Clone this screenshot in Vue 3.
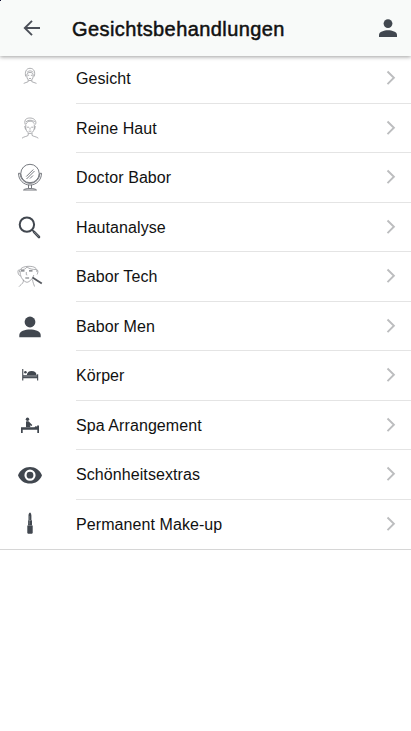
<script setup>
const items = [
    { icon: 'face', label: 'Gesicht' },
    { icon: 'towel', label: 'Reine Haut' },
    { icon: 'mirror', label: 'Doctor Babor' },
    { icon: 'search', label: 'Hautanalyse' },
    { icon: 'tech', label: 'Babor Tech' },
    { icon: 'person', label: 'Babor Men' },
    { icon: 'bed', label: 'Körper' },
    { icon: 'massage', label: 'Spa Arrangement' },
    { icon: 'eye', label: 'Schönheitsextras' },
    { icon: 'lipstick', label: 'Permanent Make-up' }
];
</script>

<template>
    <div class="page">
        <header class="toolbar">
            <span class="corner"></span>
            <button class="back" aria-label="Zurück">
                <svg width="18" height="18" viewBox="0 0 18 18">
                    <path d="M17 9H2M9 1.800 1.800 9 9 16.200" fill="none" stroke="#4b4f58" stroke-width="1.900" />
                </svg>
            </button>
            <h1 class="title">Gesichtsbehandlungen</h1>
            <button class="profile" aria-label="Profil">
                <svg width="18" height="18" viewBox="0 0 18 18">
                    <circle cx="9" cy="4.600" r="4.400" />
                    <path d="M0 18v-2.200C0 12.800 5 11.300 9 11.300s9 1.500 9 4.500V18z" />
                </svg>
            </button>
        </header>

        <ul class="list">
            <li v-for="item in items" :key="item.icon" class="item">
                <svg class="icon" width="60" height="49.5" viewBox="0 0 60 49.5">
                    <g v-if="item.icon === 'face'" class="sketch">
                        <path d="M25.7 22.5c-1-4 .2-8.2 4.3-8.2s5.500 4 4.200 8.200M26.800 21c-.2 3 1.200 5.700 3.200 5.700s3.400-2.700 3.200-5.700c-.3-2-1.600-2.600-3.200-2.600s-3 .8-3.200 2.600z" />
                        <path d="M27 18.500c2-2.300 4.500-2 6.300 0M27.700 21.300h1.500M30.900 21.300h1.500M28.900 24.500h2.200M28.200 26v1.700l-4.500 1.700M31.800 26v1.700l4.700 1.700" />
                    </g>
                    <g v-else-if="item.icon === 'towel'" class="sketch">
                        <path d="M25.200 20.500c-.8-2.500-.3-5 1.300-5.700 2-1.300 7.200-1.200 8.800 1.800 1 1.600.6 3 0 4M26 20c1.500-3.500 6.500-4 8.300-.2M26 18c2.500-2.700 6-1.800 8.800-.3" />
                        <path d="M25.800 20.500v4c.7 3.200 2.500 5 4.200 5s3.600-1.800 4.300-5v-4M24.700 22l.8 3.500M35.300 22l-.7 3.500" />
                        <path d="M27 23.200h2M31.200 23.200h2M30 23.500v2.200M28.600 27.200h2.800M28.200 29v2.400c-1.500 1.200-4 1-6.200 2.800M32 29v2.400c1.500 1.200 4 1 6.300 2.800" />
                    </g>
                    <g v-else-if="item.icon === 'mirror'" class="line">
                        <circle cx="30" cy="20.500" r="9.200" />
                        <path d="M18.500 20.300h1.700c0 5.500 4.200 10 9.800 10s9.800-4.500 9.800-10h1.700c0 6.600-5 11.700-11.500 11.700s-11.500-5.100-11.500-11.700zM28.500 32v3M31.500 32v3M23.500 37c1.500-2 11.500-2 13 0z" />
                        <path d="M26.300 23.500l7-7M26.500 26l8-8M30 25.500l3-3" />
                    </g>
                    <g v-else-if="item.icon === 'search'">
                        <circle cx="26.900" cy="21.600" r="7.200" fill="none" stroke="#41474f" stroke-width="2" />
                        <path d="M32 26.800l2 2" stroke="#41474f" stroke-width="1.600" />
                        <path d="M34 28.800l5 5.200" stroke="#41474f" stroke-width="2.600" stroke-linecap="round" />
                        <path d="M34.300 29l4.500 4.700" stroke="#b2b5b8" stroke-width=".6" />
                    </g>
                    <g v-else-if="item.icon === 'tech'" class="sketch">
                        <path d="M19.700 20c-.5-3.500 3.800-5.700 9.300-5.700s8.500 2 7.800 5.700M20.500 17.500c3 .5 5-.3 6.500-2.500 2.500 2 5.500 2.500 9 2.500" />
                        <path d="M19.600 18c-2-.5-2 2-1 4.500l1.800 1.500M36.300 18c2-.5 2 2 .8 4.500M20 19c0 5 1.800 8.500 5 10.500 1.400 1 2.700 1 4 0 2.500-1.500 4-4 4.800-6.500" />
                        <path d="M26.300 20v2.700l1 .3M23.300 27.700v2c-.5 2.300-3 3-4.300 5M32.500 27.500c.3 3 1.500 5 2 7" />
                        <path class="dark" d="M21 18.800h3.500M29 18.800h3.500M25.300 26h3.800" />
                        <path class="tool" d="M32.500 25.500l9.300 6" />
                    </g>
                    <g v-else-if="item.icon === 'person'" class="solid">
                        <circle cx="30" cy="20" r="5.400" />
                        <path d="M19.300 35.300v-2.400c0-3.800 6-5.500 10.700-5.500s10.700 1.700 10.700 5.500v2.400z" />
                    </g>
                    <g v-else-if="item.icon === 'bed'" class="solid">
                        <path d="M22.200 18h1.100v6.200h13.800v-1h1.100v6.200h-1.100v-2.100H23.300v2.100h-1.100z" />
                        <circle cx="25.400" cy="21.300" r="1.300" />
                        <path d="M26.800 24c.2-2.500 2-4.100 4.800-4.100 3 0 4.700 1.400 4.900 4.100z" />
                        <path d="M23.300 25.700h13.600" stroke="#aeb1b5" stroke-width=".5" />
                    </g>
                    <g v-else-if="item.icon === 'massage'" class="solid">
                        <circle cx="27.500" cy="18.300" r="1.700" />
                        <path d="M26 20.500c1.800-.8 3.500-.2 4 1.200l2.300 2.300-.8 1-1.700-.7.800 1.900H26z" />
                        <path d="M21 26.200h13.500l1.300-1.200 1.300.7v-1.200h1.900v7.400h-1.700v-3.200H22.700v3.200H21z" />
                    </g>
                    <g v-else-if="item.icon === 'eye'">
                        <path class="solid" d="M18 25.200C20 20 24.600 16.900 30 16.900S40 20 42 25.200c-2 5.300-6.600 8.400-12 8.400s-10-3.100-12-8.400z" />
                        <circle cx="30" cy="25.200" r="4.500" fill="#41474f" stroke="#fff" stroke-width="2.200" />
                    </g>
                    <g v-else class="solid">
                        <path d="M28.500 20v-4.500c0-1.600.8-2.600 1.700-2.900.8.800 1.200 1.800 1.200 3V20zM28 20.300h4v4.900h-4zM27.300 25.500h5.400v7.600l-.7.700h-4l-.7-.7z" />
                        <path d="M29.100 16v8.500" stroke="#999da1" stroke-width=".6" />
                    </g>
                </svg>
                <div class="content">
                    <span class="label">{{ item.label }}</span>
                    <svg class="chevron" width="10" height="16" viewBox="0 0 10 16">
                        <path d="M1.500 1.500 7.900 7.800l-6.400 6.300" fill="none" stroke="#bcbdbf" stroke-width="1.900" />
                    </svg>
                </div>
            </li>
        </ul>
    </div>
</template>

<style>
body {
    margin: 0;
    background: #fff;
}
</style>

<style scoped>
.page {
    min-height: 731px;
    background: #fff;
    color: #111;
    font-family: "Liberation Sans", Arial, sans-serif;
}

.toolbar {
    position: relative;
    display: flex;
    align-items: center;
    box-sizing: border-box;
    height: 56px;
    padding: 0 14px 0 23px;
    background: #f8faf9;
    box-shadow: 0 1px 4px rgba(0, 0, 0, 0.38);
}

.corner {
    position: absolute;
    top: 0;
    left: 0;
    width: 1px;
    height: 1px;
    background: #111133;
}

.back,
.profile {
    display: flex;
    padding: 0;
    border: 0;
    background: none;
}

.profile {
    fill: #41474f;
}

.title {
    flex: 1;
    margin: 2px 0 0 31px;
    font-size: 20px;
    font-weight: 400;
    line-height: 24px;
    letter-spacing: 0.41px;
    color: #111;
    -webkit-text-stroke: 0.5px #111;
}

.list {
    margin: -2px 0 0;
    padding: 0;
    list-style: none;
    border-bottom: 1px solid #d6d6d6;
}

.item {
    display: flex;
    height: 49.5px;
}

.icon {
    flex: none;
    margin-right: 16px;
}

.content {
    flex: 1;
    display: flex;
    align-items: center;
    justify-content: space-between;
    box-sizing: border-box;
    padding-right: 15px;
    border-bottom: 1px solid #e4e4e4;
}

.item:last-child .content {
    border-bottom: 0;
}

.label {
    padding-top: 2px;
    font-size: 16px;
    line-height: 20px;
    letter-spacing: 0.08px;
}

.solid {
    fill: #41474f;
}

.line {
    fill: none;
    stroke: #666a70;
    stroke-width: 0.9;
}

.sketch {
    fill: none;
    stroke: #8b8d90;
    stroke-width: 0.7;
}

.sketch .dark {
    stroke: #6b6e73;
    stroke-width: 1.2;
}

.sketch .tool {
    stroke: #55585e;
    stroke-width: 1.8;
}
</style>
